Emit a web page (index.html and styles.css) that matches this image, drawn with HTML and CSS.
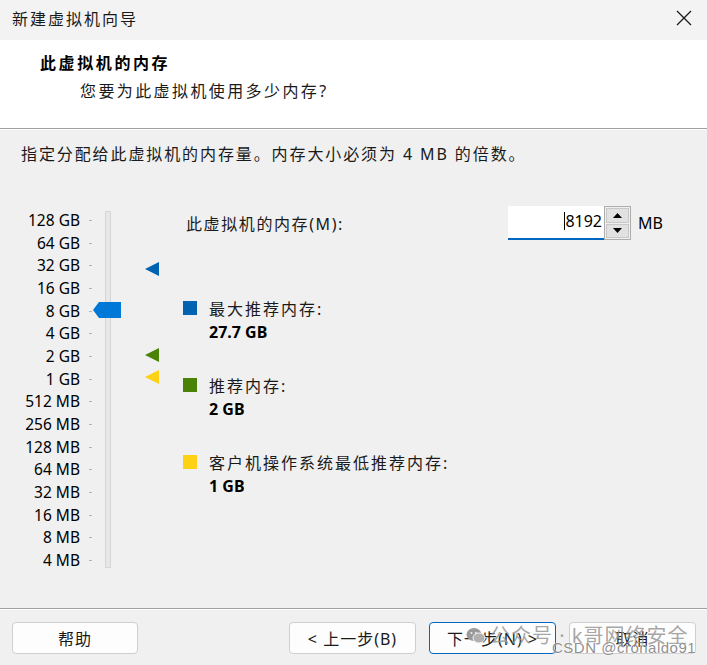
FILE: index.html
```html
<!DOCTYPE html>
<html lang="zh-CN">
<head>
<meta charset="utf-8">
<title>新建虚拟机向导</title>
<link rel="stylesheet" href="styles.css">
</head>
<body>
<div class="window">
  <div class="titlebar">
    <span class="title">新建虚拟机向导</span>
    <svg class="close" width="16" height="16" viewBox="0 0 16 16"><path d="M1 1L15 15M15 1L1 15" stroke="#1a1a1a" stroke-width="1.3" fill="none"/></svg>
  </div>
  <div class="header">
    <div class="h-title">此虚拟机的内存</div>
    <div class="h-sub">您要为此虚拟机使用多少内存?</div>
  </div>
  <div class="content">
    <p class="instr">指定分配给此虚拟机的内存量。内存大小必须为 4 MB 的倍数。</p>
    <div class="main">
      <div class="scale">
        <div class="labels">
          <div class="lbl">128 GB</div><div class="lbl">64 GB</div><div class="lbl">32 GB</div><div class="lbl">16 GB</div>
          <div class="lbl">8 GB</div><div class="lbl">4 GB</div><div class="lbl">2 GB</div><div class="lbl">1 GB</div>
          <div class="lbl">512 MB</div><div class="lbl">256 MB</div><div class="lbl">128 MB</div><div class="lbl">64 MB</div>
          <div class="lbl">32 MB</div><div class="lbl">16 MB</div><div class="lbl">8 MB</div><div class="lbl">4 MB</div>
        </div>
        <div class="slider">
          <div class="track"></div>
          <svg class="thumb" width="28" height="16" viewBox="0 0 28 16"><path d="M0 8L6 0H28V16H6Z" fill="#0078d7"/></svg>
          <svg class="mark mark-max" width="14" height="14" viewBox="0 0 14 14"><path d="M0 7L14 0V14Z" fill="#0063b1"/></svg>
          <svg class="mark mark-rec" width="14" height="14" viewBox="0 0 14 14"><path d="M0 7L14 0V14Z" fill="#498205"/></svg>
          <svg class="mark mark-min" width="14" height="14" viewBox="0 0 14 14"><path d="M0 7L14 0V14Z" fill="#fcd116"/></svg>
        </div>
      </div>
      <div class="right">
        <div class="mem-row">
          <span class="mem-label">此虚拟机的内存(M):</span>
          <div class="spin">
            <div class="spin-input"><span class="caret"></span>8192</div>
            <div class="spin-btns">
              <div class="spin-btn"><svg width="9" height="5" viewBox="0 0 9 5"><path d="M0 5L4.5 0L9 5Z" fill="#000"/></svg></div>
              <div class="spin-btn"><svg width="9" height="5" viewBox="0 0 9 5"><path d="M0 0L4.5 5L9 0Z" fill="#000"/></svg></div>
            </div>
          </div>
          <span class="unit">MB</span>
        </div>
        <div class="legend">
          <div class="item">
            <div class="item-title"><span class="sq sq-max"></span>最大推荐内存:</div>
            <div class="item-val">27.7 GB</div>
          </div>
          <div class="item">
            <div class="item-title"><span class="sq sq-rec"></span>推荐内存:</div>
            <div class="item-val">2 GB</div>
          </div>
          <div class="item">
            <div class="item-title"><span class="sq sq-min"></span>客户机操作系统最低推荐内存:</div>
            <div class="item-val">1 GB</div>
          </div>
        </div>
      </div>
    </div>
  </div>
  <div class="footer">
    <button class="btn btn-help">帮助</button>
    <div class="nav">
      <button class="btn">&lt; 上一步(B)</button>
      <button class="btn btn-primary">下一步(N) &gt;</button>
      <button class="btn">取消</button>
    </div>
    <div class="wm">
      <div class="wm-line1"><svg class="wm-icon" width="20" height="18" viewBox="0 0 20 18"><ellipse cx="8" cy="7.5" rx="7.5" ry="6.5" fill="#9a9a9a"/><ellipse cx="13" cy="11" rx="6" ry="5" fill="#b0b0b0" stroke="#f0f0f0" stroke-width="1"/><circle cx="5.5" cy="6" r="1" fill="#f0f0f0"/><circle cx="10" cy="6" r="1" fill="#f0f0f0"/></svg>公众号 · k哥网络安全</div>
      <div class="wm-line2">CSDN @cronaldo91</div>
    </div>
  </div>
</div>
</body>
</html>
```

FILE: styles.css
```css
html, body {
  margin: 0;
  padding: 0;
}
body {
  width: 707px;
  height: 665px;
  overflow: hidden;
  font-family: "Noto Sans", "Noto Sans CJK SC", sans-serif;
  font-size: 16px;
  color: #000;
  background: #f0f0f0;
}
.window {
  width: 707px;
  height: 665px;
  display: flex;
  flex-direction: column;
  background: #f0f0f0;
}
.titlebar {
  height: 40px;
  flex: none;
  background: #f3f3f3;
  display: flex;
  align-items: center;
  justify-content: space-between;
  padding: 0 15px 4px 12px;
  box-sizing: border-box;
}
.title {
  font-family: "Noto Sans CJK SC", sans-serif;
  font-size: 16px;
  letter-spacing: 2px;
  color: #1a1a1a;
}
.close {
  display: block;
}
.header {
  height: 89px;
  flex: none;
  box-sizing: border-box;
  background: #fff;
  border-bottom: 1px solid #a0a0a0;
  padding: 10px 0 0 40px;
}
.h-title {
  font-family: "Noto Sans CJK SC", sans-serif;
  font-weight: bold;
  font-size: 16px;
  letter-spacing: 2.6px;
  line-height: 24px;
}
.h-sub {
  font-size: 16px;
  letter-spacing: 2.4px;
  line-height: 24px;
  margin: 5px 0 0 40px;
  color: #1a1a1a;
}
.content {
  flex: 1;
  border-top: 1px solid #fff;
  padding: 0 0 0 21px;
}
.instr {
  margin: 12px 0 0 0;
  line-height: 24px;
  font-size: 16px;
  letter-spacing: 1.9px;
  color: #1a1a1a;
}
.main {
  display: flex;
  margin-top: 42px;
}
.scale {
  display: flex;
  width: 183px;
  flex: none;
  margin-left: -21px;
}
.labels {
  width: 93px;
  display: flex;
  flex-direction: column;
  padding-top: 1px;
}
.lbl {
  height: 22.67px;
  line-height: 22.67px;
  text-align: right;
  padding-right: 13px;
  position: relative;
  font-size: 15.5px;
}
.lbl::after {
  content: "";
  position: absolute;
  right: 1px;
  top: 11px;
  width: 3px;
  height: 1px;
  background: #b4b4b4;
}
.slider {
  position: relative;
  width: 90px;
}
.track {
  position: absolute;
  left: 12px;
  top: 3px;
  width: 4px;
  height: 355px;
  background: #e7e7e7;
  border: 1px solid #d6d6d6;
}
.thumb {
  position: absolute;
  left: 0;
  top: 94px;
}
.mark {
  position: absolute;
  left: 52px;
}
.mark-max { top: 54px; }
.mark-rec { top: 140px; }
.mark-min { top: 162px; }
.right {
  flex: 1;
}
.mem-row {
  display: flex;
  align-items: center;
  height: 34px;
  margin-top: -2px;
}
.mem-label {
  margin-left: 3px;
  letter-spacing: 1.6px;
  width: 322px;
  color: #1a1a1a;
}
.spin {
  display: flex;
  height: 34px;
}
.spin-input {
  width: 96px;
  height: 34px;
  box-sizing: border-box;
  background: #fff;
  border-bottom: 2px solid #0067c0;
  text-align: right;
  padding-right: 2px;
  line-height: 30px;
  font-size: 16px;
}
.caret {
  display: inline-block;
  width: 1px;
  height: 18px;
  background: #000;
  vertical-align: -3px;
}
.spin-btns {
  width: 27px;
  height: 34px;
  box-sizing: border-box;
  border: 1px solid #adadad;
  display: flex;
  flex-direction: column;
  padding: 1px;
  gap: 1px;
  background: #f0f0f0;
}
.spin-btn {
  flex: 1;
  background: #e1e1e1;
  border: 1px solid #c8c8c8;
  display: flex;
  align-items: center;
  justify-content: center;
}
.spin-btn svg { display: block; }
.unit {
  margin-left: 7px;
  font-size: 16px;
}
.legend {
  margin-top: 56px;
  display: flex;
  flex-direction: column;
  gap: 29px;
}
.item-title {
  display: flex;
  align-items: center;
  height: 24px;
  letter-spacing: 2px;
  color: #1a1a1a;
}
.sq {
  width: 14px;
  height: 14px;
  margin-right: 12px;
  flex: none;
}
.sq-max { background: #0063b1; }
.sq-rec { background: #498205; }
.sq-min { background: #fcd116; }
.item-val {
  height: 24px;
  line-height: 24px;
  margin-left: 26px;
  font-weight: bold;
  font-size: 16px;
}
.footer {
  height: 57px;
  flex: none;
  border-top: 1px solid #a0a0a0;
  box-shadow: inset 0 1px 0 #fff;
  display: flex;
  justify-content: space-between;
  padding: 13px 11px 0 12px;
  box-sizing: border-box;
  position: relative;
}
.nav {
  display: flex;
  gap: 13px;
}
.btn {
  width: 127px;
  height: 32px;
  box-sizing: border-box;
  border: 1px solid #cfcfcf;
  border-radius: 4px;
  background: #fdfdfd;
  font-family: "Noto Sans", "Noto Sans CJK SC", sans-serif;
  font-size: 16px;
  color: #1a1a1a;
  letter-spacing: 1px;
  padding: 0;
}
.btn-help { width: 126px; }
.btn-primary {
  border: 1.5px solid #0067c0;
}
.wm {
  position: absolute;
  left: 466px;
  top: 14px;
  color: rgba(150, 150, 150, 0.85);
  pointer-events: none;
}
.wm-line1 {
  display: flex;
  align-items: center;
  font-size: 20px;
  letter-spacing: 1px;
  line-height: 26px;
}
.wm-icon {
  margin-right: 4px;
}
.wm-line2 {
  margin: -10px 0 0 86px;
  font-family: "Liberation Sans", sans-serif;
  font-size: 15px;
  letter-spacing: 0.5px;
  color: rgba(130, 130, 130, 0.9);
  text-shadow: 0 0 2px #fff;
}
```
